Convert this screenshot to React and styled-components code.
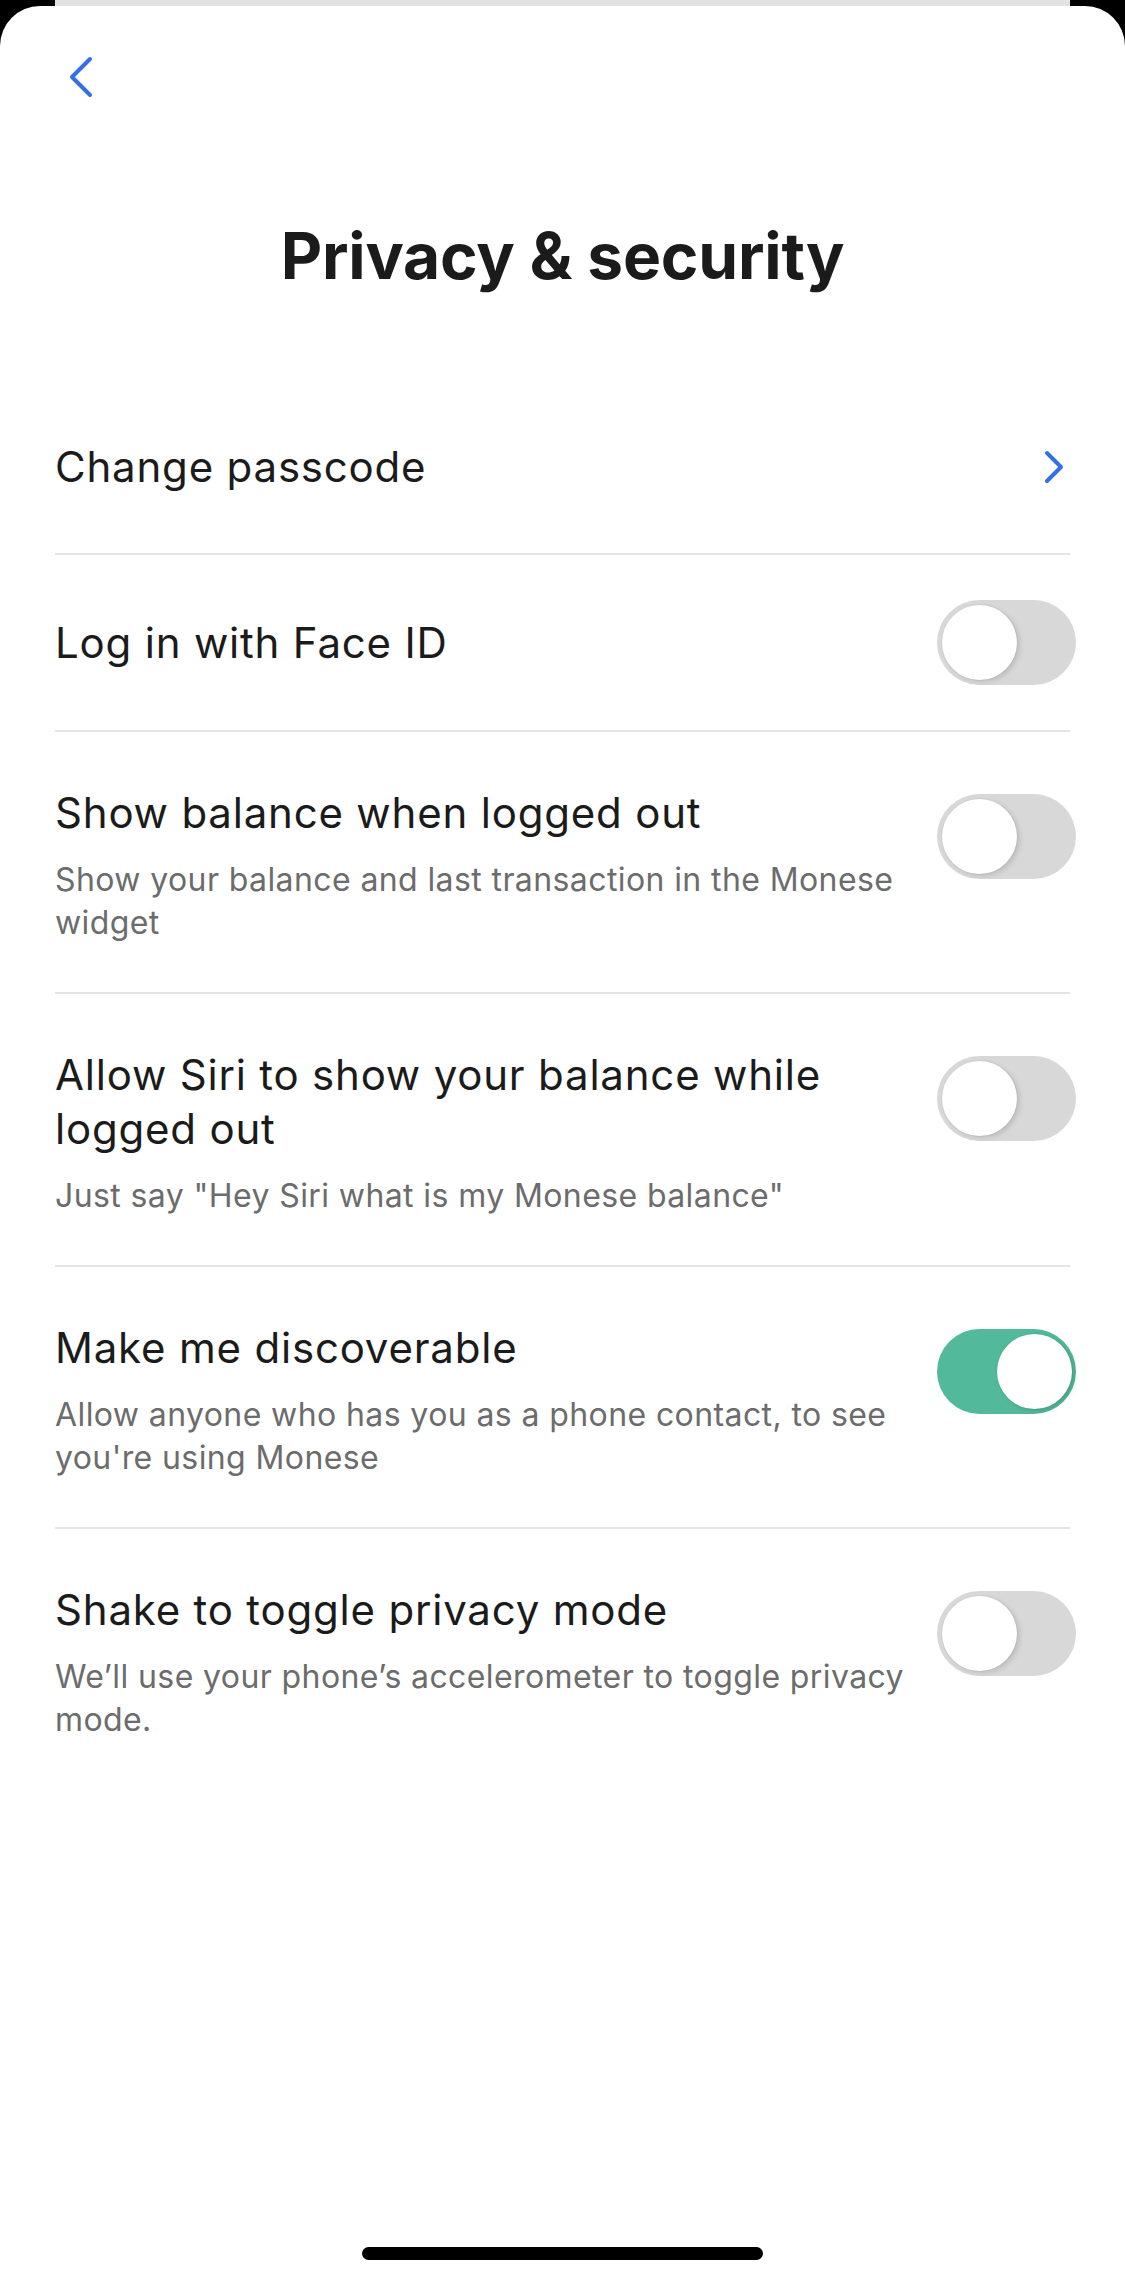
import React from "react";
import styled, { createGlobalStyle } from "styled-components";

const GlobalStyle = createGlobalStyle`
  html, body {
    margin: 0;
    padding: 0;
    background: #000;
  }
  body {
    font-family: Inter, "Noto Sans", "Liberation Sans", sans-serif;
    -webkit-font-smoothing: antialiased;
  }
  * { box-sizing: border-box; }
`;

const Screen = styled.div`
  width: 1125px;
  min-height: 2283px;
  background: #000;
  display: flex;
  flex-direction: column;
`;

const BackCard = styled.div`
  height: 6px;
  margin: 0 55px;
  background: #e2e2e2;
  flex-shrink: 0;
`;

const Sheet = styled.div`
  flex: 1;
  background: #fff;
  border-radius: 40px 40px 0 0;
  display: flex;
  flex-direction: column;
`;

const NavBar = styled.div`
  height: 142px;
  display: flex;
  align-items: center;
  padding-left: 65px;
`;

const IconButton = styled.button`
  border: 0;
  background: transparent;
  padding: 0;
  display: flex;
  align-items: center;
  justify-content: center;
  width: 32px;
  height: 44px;
  cursor: pointer;
`;

const Title = styled.h1`
  margin: 68px 0 84px;
  text-align: center;
  font-size: 64px;
  line-height: 80px;
  font-weight: 700;
  color: #1b1b1b;
  letter-spacing: -0.2px;
`;

const List = styled.div`
  display: flex;
  flex-direction: column;
  padding: 0 55px;
`;

const Row = styled.div`
  display: flex;
  align-items: ${(p) => (p.$multi ? "flex-start" : "center")};
  padding: ${(p) => (p.$multi ? "54px 0 48px" : "45px 0")};
  min-height: ${(p) => (p.$multi ? "auto" : "175px")};
  border-bottom: ${(p) => (p.$last ? "none" : "2px solid #e4e4e4")};
`;

const TextCol = styled.div`
  flex: 1;
  min-width: 0;
  display: flex;
  flex-direction: column;
  gap: 18px;
`;

const RowTitle = styled.div`
  font-size: 42px;
  line-height: 54px;
  font-weight: 400;
  letter-spacing: 0.8px;
  color: #1b1b1b;
`;

const RowSub = styled.div`
  font-size: 32px;
  line-height: 43px;
  font-weight: 400;
  letter-spacing: 0.4px;
  color: #6c6c6c;
`;

const ChevronWrap = styled.div`
  width: 30px;
  display: flex;
  justify-content: flex-end;
  margin-left: 12px;
  margin-right: 5px;
`;

const Track = styled.div`
  position: relative;
  width: 139px;
  height: 85px;
  border-radius: 43px;
  flex-shrink: 0;
  margin-left: 12px;
  margin-right: -6px;
  margin-top: ${(p) => (p.$multi ? "8px" : "0")};
  background: ${(p) => (p.$on ? "#52b99a" : "#d8d8d8")};
`;

const Knob = styled.div`
  position: absolute;
  top: 5px;
  left: ${(p) => (p.$on ? "60px" : "5px")};
  width: 75px;
  height: 75px;
  border-radius: 50%;
  background: #fff;
  box-shadow: 0 0 0 1px rgba(0, 0, 0, 0.03), 3px 2px 5px rgba(0, 0, 0, 0.12);
`;

const Spacer = styled.div`
  flex: 1;
`;

const HomeBar = styled.div`
  align-self: center;
  width: 401px;
  height: 13px;
  border-radius: 7px;
  background: #000;
  margin-bottom: 23px;
`;

const BackIcon = () => (
  <svg width="26" height="42" viewBox="0 0 26 42" fill="none">
    <path
      d="M22 3 L4 21 L22 39"
      stroke="#3370e3"
      strokeWidth="4"
      strokeLinecap="round"
      strokeLinejoin="round"
    />
  </svg>
);

const ForwardIcon = () => (
  <svg width="22" height="34" viewBox="0 0 22 34" fill="none">
    <path
      d="M4 3 L18 17 L4 31"
      stroke="#3370e3"
      strokeWidth="4"
      strokeLinecap="round"
      strokeLinejoin="round"
    />
  </svg>
);

const Toggle = ({ on, multi }) => (
  <Track $on={on} $multi={multi}>
    <Knob $on={on} />
  </Track>
);

const settings = [
  { title: "Log in with Face ID", on: false },
  {
    title: "Show balance when logged out",
    sub: "Show your balance and last transaction in the Monese widget",
    on: false,
  },
  {
    title: "Allow Siri to show your balance while logged out",
    sub: 'Just say "Hey Siri what is my Monese balance"',
    on: false,
  },
  {
    title: "Make me discoverable",
    sub: "Allow anyone who has you as a phone contact, to see you're using Monese",
    on: true,
  },
  {
    title: "Shake to toggle privacy mode",
    sub: "We\u2019ll use your phone\u2019s accelerometer to toggle privacy mode.",
    on: false,
  },
];

export default function App() {
  return (
    <>
      <GlobalStyle />
      <Screen>
        <BackCard />
        <Sheet>
          <NavBar>
            <IconButton aria-label="Back">
              <BackIcon />
            </IconButton>
          </NavBar>
          <Title>Privacy &amp; security</Title>
          <List>
            <Row>
              <TextCol>
                <RowTitle>Change passcode</RowTitle>
              </TextCol>
              <ChevronWrap>
                <ForwardIcon />
              </ChevronWrap>
            </Row>
            {settings.map((s, i) => (
              <Row key={s.title} $multi={!!s.sub} $last={i === settings.length - 1}>
                <TextCol>
                  <RowTitle>{s.title}</RowTitle>
                  {s.sub && <RowSub>{s.sub}</RowSub>}
                </TextCol>
                <Toggle on={s.on} multi={!!s.sub} />
              </Row>
            ))}
          </List>
          <Spacer />
          <HomeBar />
        </Sheet>
      </Screen>
    </>
  );
}
